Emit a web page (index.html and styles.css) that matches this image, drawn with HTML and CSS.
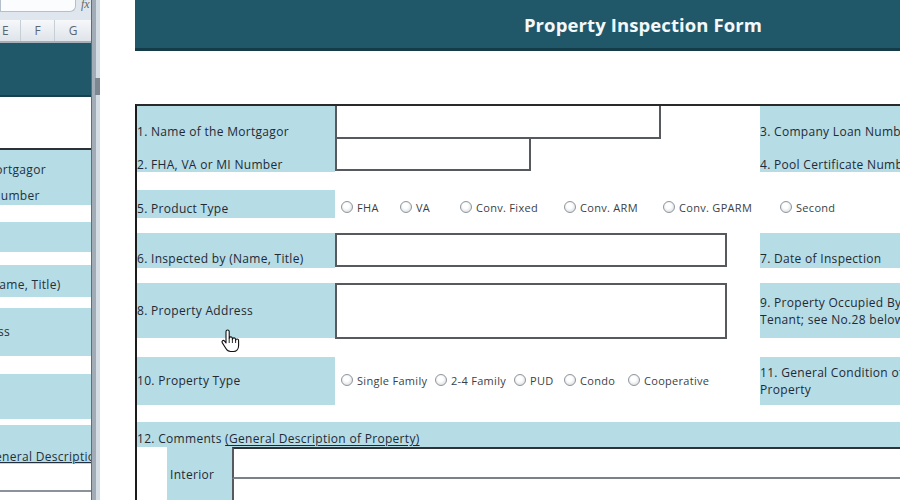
FILE: index.html
```html
<!DOCTYPE html>
<html lang="en">
<head>
<meta charset="utf-8">
<title>Property Inspection Form</title>
<link rel="stylesheet" href="styles.css">
</head>
<body>
<div class="screen">
  <aside class="sheet">
    <div class="sheet-cells">
      <div class="fbar"><div class="fbox"></div><span class="fx">fx</span></div>
      <div class="colhead">
        <span class="ch ch-e">E</span><span class="ch ch-f">F</span><span class="ch ch-g">G</span>
      </div>
      <div class="s s-teal"></div>
      <div class="s s-white s-top"></div>
      <div class="s s-blue s-a">
        <span class="s-text">1. Name of the Mortgagor</span>
        <span class="s-text">2. FHA, VA or MI Number</span>
      </div>
      <div class="s s-white s-g17"></div>
      <div class="s s-blue s-b"></div>
      <div class="s s-white s-g13"></div>
      <div class="s s-blue s-c"><span class="s-text">6. Inspected by (Name, Title)</span></div>
      <div class="s s-white s-g11"></div>
      <div class="s s-blue s-d"><span class="s-text">8. Property Address</span></div>
      <div class="s s-white s-g18"></div>
      <div class="s s-blue s-e"></div>
      <div class="s s-white s-g6"></div>
      <div class="s s-blue s-f"><span class="s-text">12. Comments (<u>General Description of Property</u>)</span></div>
      <div class="s s-white s-last"></div>
    </div>
    <div class="scroll"><div class="thumb"></div></div>
  </aside>

  <main class="doc">
    <header class="title-band"><h1>Property Inspection Form</h1></header>

    <section class="form">
      <div class="row row-a">
        <div class="lab lab-split">
          <div class="half">1. Name of the Mortgagor</div>
          <div class="half">2. FHA, VA or MI Number</div>
        </div>
        <div class="mid mid-stack">
          <div class="box in1"></div>
          <div class="box in2"></div>
        </div>
        <div class="rlab lab-split">
          <div class="half">3. Company Loan Number</div>
          <div class="half">4. Pool Certificate Number</div>
        </div>
      </div>
      <div class="gap g18"></div>

      <div class="row row-b">
        <div class="lab lab-bottom">5. Product Type</div>
        <div class="mid radios radios-product">
          <span class="opt"><i class="rb"></i>FHA</span>
          <span class="opt"><i class="rb"></i>VA</span>
          <span class="opt"><i class="rb"></i>Conv. Fixed</span>
          <span class="opt"><i class="rb"></i>Conv. ARM</span>
          <span class="opt"><i class="rb"></i>Conv. GPARM</span>
          <span class="opt"><i class="rb"></i>Second</span>
        </div>
        <div class="rblank"></div>
      </div>
      <div class="gap g15"></div>

      <div class="row row-c">
        <div class="lab lab-bottom">6. Inspected by (Name, Title)</div>
        <div class="mid"><div class="box in-wide in-c"></div></div>
        <div class="rlab lab-bottom">7. Date of Inspection</div>
      </div>
      <div class="gap g15"></div>

      <div class="row row-d">
        <div class="lab lab-center">8. Property Address</div>
        <div class="mid"><div class="box in-wide in-d"></div></div>
        <div class="rlab lab-lines">9. Property Occupied By (Owner,<br>Tenant; see No.28 below)</div>
      </div>
      <div class="gap g19"></div>

      <div class="row row-e">
        <div class="lab lab-center">10. Property Type</div>
        <div class="mid radios radios-type">
          <span class="opt"><i class="rb"></i>Single Family</span>
          <span class="opt"><i class="rb"></i>2-4 Family</span>
          <span class="opt"><i class="rb"></i>PUD</span>
          <span class="opt"><i class="rb"></i>Condo</span>
          <span class="opt"><i class="rb"></i>Cooperative</span>
        </div>
        <div class="rlab lab-lines">11. General Condition of<br>Property</div>
      </div>
      <div class="gap g17"></div>

      <div class="band">12. Comments <u>(General Description of Property)</u></div>
      <div class="comments">
        <div class="indent"></div>
        <div class="sub-lab">Interior</div>
        <div class="sub-inputs">
          <div class="box in-int"></div>
          <div class="box in-next"></div>
        </div>
      </div>
    </section>
  </main>
</div>

<svg class="cursor" width="20" height="24" viewBox="0 0 20 24" aria-hidden="true">
  <path d="M6,2.6 a1.6,1.6 0 0 1 3.2,0 V9.5 a1.6,1.6 0 0 1 3.2,0 V10.5 a1.6,1.6 0 0 1 3.2,0 V11.5 a1.5,1.5 0 0 1 3,0 V16.5 c0,3.5 -2.2,6 -5,6 H10.5 c-2.2,0 -3.4,-1 -4.6,-3 L2.2,13.6 a1.4,1.4 0 0 1 2.2,-1.7 L6,14 Z"
        fill="#fff" stroke="#111" stroke-width="1.1" stroke-linejoin="round"/>
  <path d="M9.2,9.5 V14 M12.4,10.5 V14 M15.6,11.5 V14" stroke="#111" stroke-width="0.9" fill="none"/>
</svg>
</body>
</html>
```

FILE: styles.css
```css
html, body {
  margin: 0;
  padding: 0;
}
body {
  width: 900px;
  height: 500px;
  overflow: hidden;
  background: #ffffff;
  font-family: "Open Sans", "Liberation Sans", sans-serif;
  color: #1f2a35;
  position: relative;
}
.screen {
  display: flex;
  width: 1200px;
  height: 500px;
}

/* ---------- left spreadsheet strip ---------- */
.sheet {
  display: flex;
  flex: none;
  width: 100px;
  height: 500px;
}
.sheet-cells {
  width: 91px;
  border-right: 1px solid #5f6d78;
  overflow: hidden;
  display: flex;
  flex-direction: column;
}
.fbar {
  height: 20px;
  flex: none;
  background: #dfe6ee;
  display: flex;
  align-items: flex-start;
}
.fbox {
  width: 74px;
  height: 11px;
  background: #fbfcfd;
  border: 1px solid #b3bfcb;
  border-top: 0;
  border-radius: 0 0 6px 0;
}
.fx {
  margin-left: 5px;
  margin-top: -2px;
  font-family: "Liberation Serif", serif;
  font-style: italic;
  font-size: 12px;
  line-height: 12px;
  color: #666;
}
.colhead {
  height: 21px;
  flex: none;
  display: flex;
  background: linear-gradient(#f6f8fa, #dfe4ea);
  border-bottom: 2px solid #a7b0b9;
}
.ch {
  display: flex;
  align-items: center;
  justify-content: center;
  font-size: 12px;
  color: #5b6670;
  border-right: 1px solid #c6ced6;
}
.ch-e { width: 18px; justify-content: flex-start; padding-left: 2px; }
.ch-f { width: 34px; }
.ch-g { width: 36px; border-right: 0; }
.s { flex: none; display: flex; flex-direction: column; }
.s-teal { height: 52px; background: #215869; border-bottom: 2px solid #17414e; }
.s-white { background: #fff; }
.s-blue { background: #b6dce6; }
.s-top { height: 51px; border-bottom: 2px solid #2b3137; }
.s-a { height: 55px; justify-content: flex-end; gap: 12px; padding-bottom: 2px; box-sizing: border-box; }
.s-g17 { height: 17px; }
.s-b { height: 30px; }
.s-g13 { height: 13px; }
.s-c { height: 32px; justify-content: flex-end; padding-bottom: 5px; box-sizing: border-box; }
.s-g11 { height: 11px; }
.s-d { height: 48px; justify-content: center; }
.s-g18 { height: 18px; }
.s-e { height: 45px; }
.s-g6 { height: 6px; }
.s-f { height: 39px; justify-content: flex-end; }
.s-last { height: 26px; border-bottom: 2px solid #8b9299; }
.s-text {
  margin-left: -106px;
  white-space: nowrap;
  font-size: 12px;
  letter-spacing: 0.3px;
  line-height: 14px;
  color: #233040;
}
.scroll {
  width: 8px;
  background: linear-gradient(to right, #a2acb6 0 4px, #d4dce4 4px);
}
.thumb {
  margin-top: 78px;
  height: 17px;
  width: 5px;
  margin-left: 3px;
  background: #7c8792;
}

/* ---------- main document ---------- */
.doc {
  flex: none;
  margin-left: 35px;
  width: 1016px;
}
.title-band {
  height: 48px;
  background: #215869;
  border-bottom: 3px solid #143c48;
  display: flex;
  align-items: center;
  justify-content: center;
}
.title-band h1 {
  margin: 0;
  font-size: 18.5px;
  font-weight: 700;
  color: #f4f8fa;
  letter-spacing: 0.1px;
}
.form {
  margin-top: 53px;
  border-top: 2px solid #2a2a2a;
  border-left: 2px solid #1b1b1b;
  display: flex;
  flex-direction: column;
}
.row { display: flex; flex: none; }
.gap { flex: none; }
.g15 { height: 15px; }
.g17 { height: 17px; }
.g18 { height: 18px; }
.g19 { height: 19px; }

.lab, .rlab {
  background: #b6dce6;
  font-size: 12px;
  letter-spacing: 0.3px;
  line-height: 14px;
  white-space: nowrap;
  box-sizing: border-box;
  overflow: hidden;
}
.lab { width: 198px; flex: none; }
.rlab { width: 256px; flex: none; }
.rblank { width: 256px; flex: none; }
.mid { width: 425px; flex: none; }

.lab-split { display: flex; flex-direction: column; }
.half {
  height: 33px;
  display: flex;
  align-items: flex-end;
}
.lab-bottom {
  display: flex;
  align-items: flex-end;
  padding-bottom: 2px;
}
.lab-center {
  display: flex;
  align-items: center;
}
.lab-lines {
  display: flex;
  align-items: center;
  line-height: 17px;
}

.row-a { height: 66px; }
.row-b { height: 28px; }
.row-c { height: 35px; }
.row-d { height: 55px; }
.row-e { height: 48px; }

.box {
  box-sizing: border-box;
  border: 2px solid #565a5e;
  background: #fff;
}
.mid-stack { display: flex; flex-direction: column; }
.in1 { width: 326px; height: 33px; border-top: 0; }
.in2 { width: 196px; height: 32px; border-top: 0; }
.in-wide { width: 392px; }
.in-c { height: 34px; }
.in-d { height: 56px; }

.radios {
  display: grid;
  padding-left: 6px;
  box-sizing: border-box;
  font-size: 11px;
  letter-spacing: 0.3px;
  color: #3a3f45;
  white-space: nowrap;
}
.radios-product {
  grid-template-columns: 59px 60px 104px 99px 117px auto;
  align-items: end;
  padding-bottom: 3px;
}
.radios-type {
  grid-template-columns: 94px 79px 50px 64px auto;
  align-items: center;
}
.opt {
  display: flex;
  align-items: center;
  line-height: 14px;
}
.rb {
  width: 10px;
  height: 10px;
  border: 1px solid #8e969d;
  border-radius: 50%;
  background: radial-gradient(circle at 45% 40%, #ffffff 0 30%, #dcdfe2 80%);
  margin-right: 4px;
  margin-top: -2px;
  flex: none;
}

.band {
  height: 25px;
  background: #b6dce6;
  font-size: 12px;
  letter-spacing: 0.3px;
  line-height: 14px;
  display: flex;
  align-items: flex-end;
  padding-bottom: 1px;
  box-sizing: border-box;
  white-space: pre;
}
.band u { text-underline-offset: 2px; }
.comments { display: flex; height: 60px; }
.indent { width: 30px; flex: none; }
.sub-lab {
  width: 65px;
  flex: none;
  background: #b6dce6;
  font-size: 12px;
  letter-spacing: 0.3px;
  padding-left: 3px;
  box-sizing: border-box;
  display: flex;
  align-items: center;
  padding-bottom: 6px;
}
.sub-inputs { flex: 1; display: flex; flex-direction: column; }
.in-int {
  height: 35px;
  border-width: 2px 0 2px 2px;
  border-color: #2e3337 #7c8186 #7c8186 #565a5e;
}
.in-next {
  height: 30px;
  border-width: 0 0 0 2px;
}

.cursor {
  position: absolute;
  left: 220px;
  top: 329px;
}
```
